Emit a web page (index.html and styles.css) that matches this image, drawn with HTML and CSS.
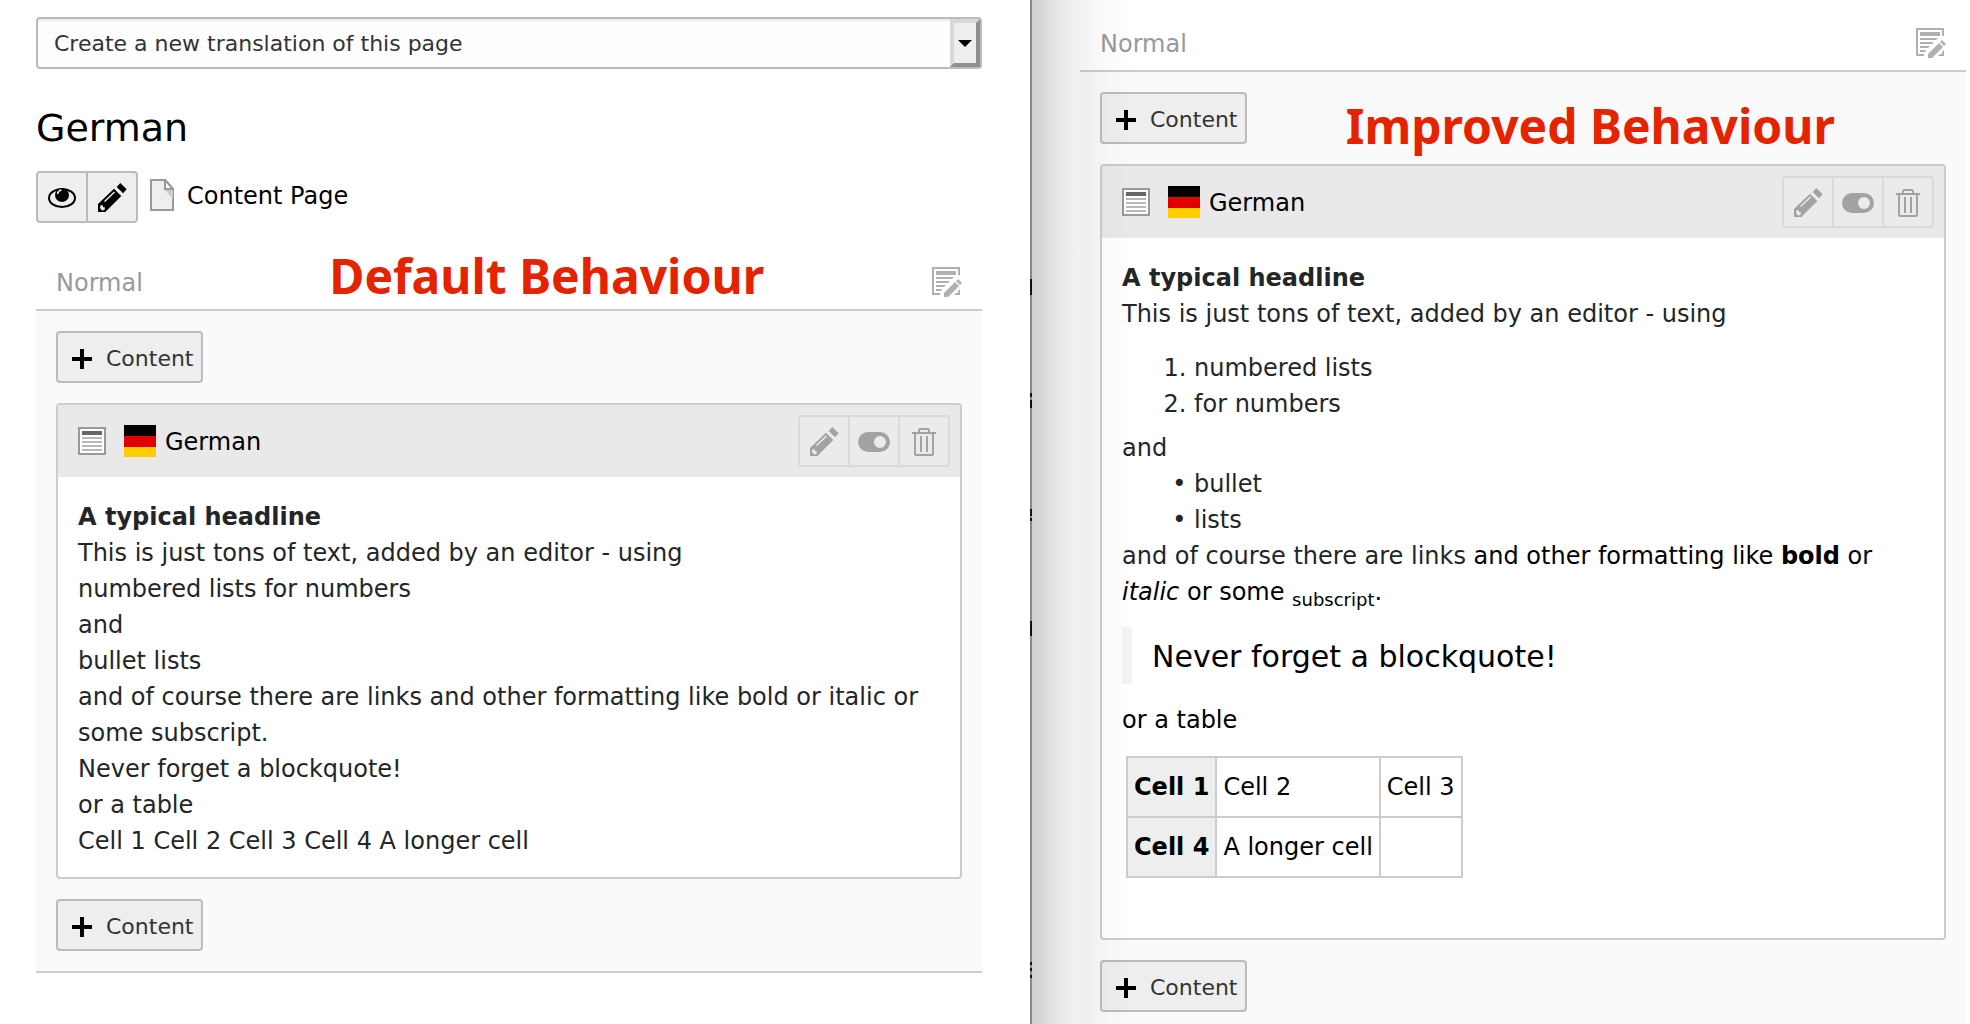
FILE: index.html
```html
<!DOCTYPE html>
<html lang="en">
<head>
<meta charset="utf-8">
<title>Page translation preview</title>
<link rel="stylesheet" href="styles.css">
</head>
<body>
<svg class="sprite" aria-hidden="true">
  <symbol id="plus" viewBox="0 0 20 20"><path d="M8 0h4v8h8v4h-8v8H8v-8H0V8h8z"/></symbol>
  <symbol id="eye" viewBox="0 0 32 32"><ellipse cx="16" cy="16" rx="13" ry="9" fill="none" stroke="currentColor" stroke-width="2"/><circle cx="16" cy="13" r="7"/><path d="M11.500 12a5 5 0 0 1 4-4" fill="none" stroke="#eee" stroke-width="1.500"/></symbol>
  <symbol id="pencil" viewBox="0 0 32 32"><path d="M20.700 5 24.300 1 30.700 7.300 27 11.300z"/><path fill-rule="evenodd" d="M2 22 18 6.700 25.300 14 9.300 30H2zM4.500 23.500 4 26l2 2.500 2.500-.5.500-2.500-2-.5-.5-2zM8 19l1 1L19 10.500l-1-1z"/></symbol>
  <symbol id="toggle" viewBox="0 0 32 32"><path fill-rule="evenodd" d="M10 6h12a10 10 0 0 1 0 20H10a10 10 0 0 1 0-20zm12 4a6 6 0 1 0 0 12 6 6 0 0 0 0-12z"/></symbol>
  <symbol id="trash" viewBox="0 0 32 32"><path d="M4 6h24v2H4zM12 10h2v16h-2zM18 10h2v16h-2z"/><path d="M11 6V4l1-1h8l1 1v2M7 8v20l1 1h16l1-1V8" fill="none" stroke="currentColor" stroke-width="2"/></symbol>
  <symbol id="page" viewBox="0 0 24 32"><path d="M1 1h14l8 9v21H1z" fill="#eee" stroke="#999" stroke-width="2"/><path d="M14 10h9v10z" fill="#ccc"/><path d="M15 1v9h8z" fill="#fff" stroke="#999" stroke-width="2"/></symbol>
  <symbol id="edit-all" viewBox="0 0 30 30"><path d="M0 0h28v8h-2V2H2v24h6v2H0zM4 4h20v4H4zM4 10h18l-2 2H4zM4 14h14l-2 2H4zM4 18h10l-2 2H4zM4 22h6l-1 2H4zM28 22v6h-6l2-2h2v-2zM12 26 23 15l4 4-11 11h-4zM24 14l2-2 4 4-2 2z"/></symbol>
  <symbol id="text" viewBox="0 0 28 28"><path d="M1 1h26v26H1z" fill="#fff" stroke="#999" stroke-width="2"/><path d="M4 4h20v4H4z" fill="#666"/><path d="M4 10h20v2H4zM4 14h20v2H4zM4 18h20v2H4zM4 22h20v2H4z" fill="#b9b9b9"/></symbol>
  <symbol id="flag" viewBox="0 0 32 32"><path d="M0 0h32v11H0z" fill="#000"/><path d="M0 11h32v11H0z" fill="#e00000"/><path d="M0 22h32v10H0z" fill="#ffce00"/></symbol>
</svg>
<main class="compare">
  <section class="pane pane-default">
    <div class="select-wrap">
      <select class="select" aria-label="Create a new translation of this page">
        <option>Create a new translation of this page</option>
      </select>
      <span class="select-arrow" aria-hidden="true"></span>
    </div>
    <h1 class="language">German</h1>
    <div class="page-row">
      <div class="group">
        <button class="icon-btn" type="button" aria-label="View"><svg class="icon"><use href="#eye"/></svg></button>
        <button class="icon-btn" type="button" aria-label="Edit"><svg class="icon"><use href="#pencil"/></svg></button>
      </div>
      <svg class="page-icon"><use href="#page"/></svg>
      <span class="page-title">Content Page</span>
    </div>
    <div class="column">
      <header class="column-head">
        <span class="column-title">Normal</span>
        <strong class="note note-default">Default Behaviour</strong>
        <button class="edit-btn" type="button" aria-label="Edit column"><svg class="edit-icon"><use href="#edit-all"/></svg></button>
      </header>
      <div class="column-body">
        <button class="btn" type="button"><svg class="plus"><use href="#plus"/></svg>Content</button>
        <article class="card">
          <header class="card-head">
            <svg class="type-icon"><use href="#text"/></svg>
            <svg class="flag"><use href="#flag"/></svg>
            <span class="card-title">German</span>
            <div class="group group-muted">
              <button class="icon-btn" type="button" aria-label="Edit"><svg class="icon"><use href="#pencil"/></svg></button>
              <button class="icon-btn" type="button" aria-label="Hide"><svg class="icon"><use href="#toggle"/></svg></button>
              <button class="icon-btn" type="button" aria-label="Delete"><svg class="icon"><use href="#trash"/></svg></button>
            </div>
          </header>
          <div class="card-body">
            <strong>A typical headline</strong><br>
            This is just tons of text, added by an editor - using<br>
            numbered lists for numbers<br>
            and<br>
            bullet lists<br>
            and of course there are links and other formatting like bold or italic or some subscript.<br>
            Never forget a blockquote!<br>
            or a table<br>
            Cell 1 Cell 2 Cell 3 Cell 4 A longer cell
          </div>
        </article>
        <button class="btn" type="button"><svg class="plus"><use href="#plus"/></svg>Content</button>
      </div>
    </div>
  </section>
  <section class="pane pane-improved">
    <div class="column">
      <header class="column-head">
        <span class="column-title">Normal</span>
        <button class="edit-btn" type="button" aria-label="Edit column"><svg class="edit-icon"><use href="#edit-all"/></svg></button>
      </header>
      <div class="column-body">
        <strong class="note note-improved">Improved Behaviour</strong>
        <button class="btn" type="button"><svg class="plus"><use href="#plus"/></svg>Content</button>
        <article class="card">
          <header class="card-head">
            <svg class="type-icon"><use href="#text"/></svg>
            <svg class="flag"><use href="#flag"/></svg>
            <span class="card-title">German</span>
            <div class="group group-muted">
              <button class="icon-btn" type="button" aria-label="Edit"><svg class="icon"><use href="#pencil"/></svg></button>
              <button class="icon-btn" type="button" aria-label="Hide"><svg class="icon"><use href="#toggle"/></svg></button>
              <button class="icon-btn" type="button" aria-label="Delete"><svg class="icon"><use href="#trash"/></svg></button>
            </div>
          </header>
          <div class="card-body">
            <strong>A typical headline</strong>
            <p>This is just tons of text, added by an editor - using</p>
            <ol class="numbers"><li>numbered lists</li><li>for numbers</li></ol>
            <p>and</p>
            <ul class="bullets"><li>bullet</li><li>lists</li></ul>
            <p class="plain"><a class="link" href="#">and of course there are links</a> and other formatting like <b>bold</b> or <i>italic</i> or some <sub>subscript</sub>.</p>
            <blockquote class="quote">Never forget a blockquote!</blockquote>
            <p class="plain">or a table</p>
            <table class="table">
              <tr><th scope="row">Cell 1</th><td>Cell 2</td><td>Cell 3</td></tr>
              <tr><th scope="row">Cell 4</th><td>A longer cell</td><td></td></tr>
            </table>
          </div>
        </article>
        <button class="btn" type="button"><svg class="plus"><use href="#plus"/></svg>Content</button>
      </div>
    </div>
  </section>
</main>
</body>
</html>
```
FILE: styles.css
```css
* { box-sizing: border-box; }

body {
  margin: 0;
  background: #fff;
  color: #000;
  font: 24px/36px Verdana, "DejaVu Sans", sans-serif;
}

button, select { margin: 0; font: inherit; }
svg { display: block; flex: none; fill: currentColor; }
p { margin: 0; }
.sprite { position: absolute; width: 0; height: 0; }

.compare {
  display: grid;
  grid-template-columns: minmax(0, 1032fr) minmax(0, 938fr);
  min-height: 100vh;
}

.pane { position: relative; }
.pane-default { padding: 17px 50px 51px 36px; }
.pane-improved {
  display: flex;
  flex-direction: column;
  padding: 16px 4px 0 48px;
}

/* window edge, with slivers of the window behind it */
.pane-default::after {
  content: "";
  position: absolute;
  top: 0;
  right: 0;
  bottom: 0;
  width: 2px;
  background: linear-gradient(#888 279px, #111 279px 295px, #888 295px 393px, #111 393px 397px, #888 397px 400px, #111 400px 408px, #888 408px 509px, #111 509px 516px, #888 516px 518px, #111 518px 521px, #888 521px 621px, #111 621px 636px, #888 636px 962px, #111 962px 965px, #888 965px 968px, #111 968px 971px, #888 971px 975px, #111 975px 978px, #888 978px);
}

/* shadow the left window casts */
.pane-improved::after {
  content: "";
  position: absolute;
  top: 0;
  bottom: 0;
  left: 0;
  width: 100px;
  background: linear-gradient(90deg, rgba(0,0,0,.19), rgba(0,0,0,.13) 16px, rgba(0,0,0,.08) 32px, rgba(0,0,0,.05) 48px, rgba(0,0,0,.02) 72px, transparent);
  pointer-events: none;
}

.select-wrap { position: relative; }
.select {
  display: block;
  appearance: none;
  width: 100%;
  height: 52px;
  padding: 2px 48px 0 16px;
  border: 2px solid #bbb;
  border-radius: 4px;
  background: #fefefe;
  box-shadow: inset 0 2px 2px rgba(0,0,0,.07);
  color: #333;
  font-size: 22px;
}
.select-arrow {
  position: absolute;
  top: 2px;
  right: 2px;
  bottom: 2px;
  display: grid;
  place-items: center;
  width: 30px;
  border: 4px solid;
  border-color: #d8d8d8 #909090 #909090 #d8d8d8;
  background: #eee;
  pointer-events: none;
}
.select-arrow::before {
  content: "";
  border: 7px solid transparent;
  border-top-color: #000;
  border-bottom: 0;
}

.language { margin: 36px 0 20px; font-size: 38px; font-weight: 400; line-height: 46px; }

.page-row { display: flex; align-items: center; height: 52px; }
.page-icon { width: 24px; height: 32px; margin: 0 13px 4px 12px; }
.page-title { padding-bottom: 2px; }

.group {
  display: flex;
  border: 2px solid #bbb;
  border-radius: 4px;
  background: #eee;
}
.icon-btn { display: block; padding: 9px 8px 7px; border: 0; background: none; color: #000; }
.icon-btn + .icon-btn { border-left: 2px solid #bbb; }
.icon { width: 32px; height: 32px; }
.group-muted { border-color: #dadada; background: #ebebeb; }
.group-muted .icon-btn { color: #a3a3a3; }
.group-muted .icon-btn + .icon-btn { border-color: #dadada; }

.column { display: flex; flex: 1; flex-direction: column; }
.pane-default .column { margin-top: 32px; border-bottom: 2px solid #ccc; }
.column-head {
  position: relative;
  display: flex;
  align-items: center;
  justify-content: space-between;
  height: 56px;
  padding: 0 20px;
  border-bottom: 2px solid #ccc;
  color: #999;
}
.column-title, .card-title { padding-top: 2px; }
.edit-btn { padding: 0; border: 0; background: none; color: #b0b0b0; }
.edit-icon { width: 30px; height: 30px; }

.column-body {
  position: relative;
  display: flex;
  flex: 1;
  flex-direction: column;
  align-items: flex-start;
  gap: 20px;
  padding: 20px;
  background: #fafafa;
}
.pane-improved .column-body { padding-bottom: 12px; }

.btn {
  display: flex;
  align-items: center;
  gap: 14px;
  height: 52px;
  padding: 3px 7px 0 14px;
  border: 2px solid #bbb;
  border-radius: 4px;
  background: #eee;
  color: #333;
  font-size: 22px;
}
.plus { width: 20px; height: 20px; color: #000; }

.note {
  position: absolute;
  color: #e42400;
  font: 700 48px/56px "Noto Sans", sans-serif;
  white-space: nowrap;
}
.note-default { top: -7px; left: 31%; }
.note-improved { top: 26px; left: 30%; }

.card { align-self: stretch; border: 2px solid #ccc; border-radius: 4px; background: #fff; }
.card-head {
  display: flex;
  align-items: center;
  height: 72px;
  padding: 0 10px 0 20px;
  background: #e9e9e9;
}
.type-icon { width: 28px; height: 28px; }
.flag { width: 32px; height: 32px; margin: 0 9px 0 18px; }
.card-title { flex: 1; }
.card-body { padding: 22px 20px 18px; color: #222626; }

.numbers, .bullets { margin: 0; padding-left: 72px; }
.numbers { margin: 18px 0 8px; }
.bullets { list-style-type: "•\00a0"; }
.plain, .quote, .table { color: #000; }
.link { color: #222626; text-decoration: none; }
sub { font-size: 18px; line-height: 0; }
.quote {
  margin: 17px 0 18px;
  padding: 12px 20px 9px;
  border-left: 10px solid #f3f3f3;
  font-size: 30px;
  line-height: 36px;
}
.table { margin: 18px 4px 42px; border-collapse: collapse; }
.table th, .table td { height: 60px; padding: 0 6px; border: 2px solid #ccc; text-align: left; }
.table th { background: #eee; }
```
